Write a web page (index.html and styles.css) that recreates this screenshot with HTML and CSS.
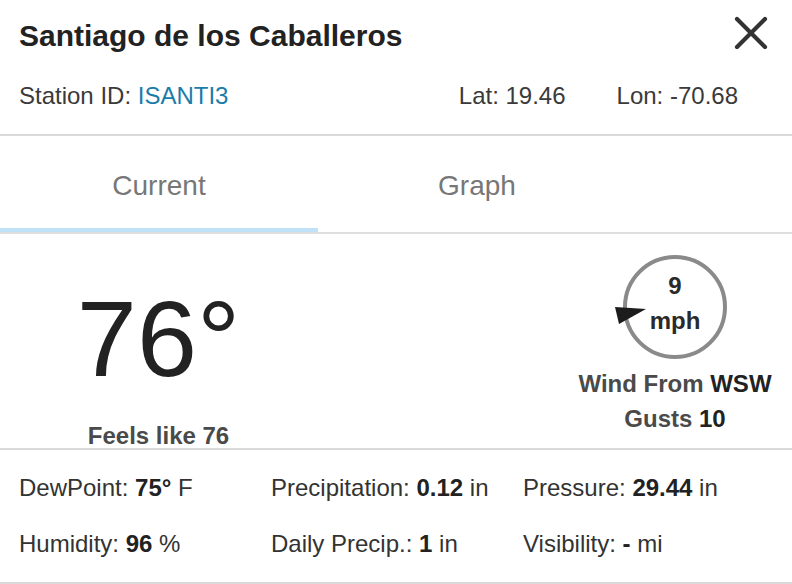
FILE: index.html
```html
<!DOCTYPE html>
<html lang="en">
<head>
<meta charset="utf-8">
<title>Santiago de los Caballeros</title>
<link rel="stylesheet" href="styles.css">
</head>
<body>
<div class="panel">
  <header class="head">
    <div class="title-row">
      <h1 class="title">Santiago de los Caballeros</h1>
      <button class="close" aria-label="Close">
        <svg width="34" height="34" viewBox="0 0 34 34"><path d="M3 4 L31 32 M31 4 L3 32" stroke="#333" stroke-width="4.2" stroke-linecap="round" fill="none"/></svg>
      </button>
    </div>
    <div class="meta">
      <span>Station ID: <a class="station" href="#">ISANTI3</a></span>
      <span class="coords"><span>Lat: 19.46</span><span>Lon: -70.68</span></span>
    </div>
  </header>

  <nav class="tabs">
    <div class="tab active">Current</div>
    <div class="tab">Graph</div>
  </nav>

  <section class="current">
    <div class="temp-col">
      <div class="temp">76°</div>
      <div class="feels">Feels like 76</div>
    </div>
    <div class="wind-col">
      <div class="dial">
        <div class="speed">9</div>
        <div class="speed">mph</div>
        <svg class="pointer" width="36" height="24" viewBox="0 0 36 24"><polygon points="2,4 33,6 6,21" fill="#1c1c1c"/></svg>
      </div>
      <div class="wind-label wind-first">Wind From <b>WSW</b></div>
      <div class="wind-label">Gusts <b>10</b></div>
    </div>
  </section>

  <section class="details">
    <div>DewPoint: <b>75°</b> F</div>
    <div>Precipitation: <b>0.12</b> in</div>
    <div>Pressure: <b>29.44</b> in</div>
    <div>Humidity: <b>96</b> %</div>
    <div>Daily Precip.: <b>1</b> in</div>
    <div>Visibility: <b>-</b> mi</div>
  </section>
</div>
</body>
</html>
```

FILE: styles.css
```css
* { box-sizing: border-box; }
html, body { margin: 0; padding: 0; background: #fff; }
body {
  font-family: "Liberation Sans", Arial, Helvetica, sans-serif;
  color: #333;
}
.panel { width: 792px; }

.head {
  padding: 19px 24px 24px 19px;
  border-bottom: 2px solid #d9d9d9;
}
.title-row {
  display: flex;
  justify-content: space-between;
  align-items: flex-start;
}
.title {
  margin: 0;
  font-size: 30px;
  line-height: 34px;
  font-weight: bold;
  color: #222;
}
.close {
  border: 0;
  background: none;
  padding: 0;
  margin: -4px 0 0 0;
  width: 34px;
  height: 34px;
  cursor: pointer;
}
.close svg { display: block; }
.meta {
  margin-top: 29px;
  display: flex;
  justify-content: space-between;
  font-size: 24px;
  line-height: 28px;
  color: #3a3a3a;
}
.station { color: #1b7caa; text-decoration: none; }
.coords { display: flex; gap: 51px; margin-right: 30px; }

.tabs {
  display: flex;
  border-bottom: 2px solid #dedede;
}
.tab {
  width: 318px;
  text-align: center;
  font-size: 28px;
  line-height: 32px;
  padding: 34px 0 26px;
  color: #777;
  border-bottom: 4px solid transparent;
}
.tab.active { border-bottom-color: #bfe2f8; }

.current {
  display: flex;
  justify-content: space-between;
  height: 216px;
  border-bottom: 2px solid #d9d9d9;
}
.temp-col {
  width: 317px;
  text-align: center;
  padding-top: 50px;
}
.temp {
  font-size: 108px;
  line-height: 110px;
  color: #222;
}
.feels {
  margin-top: 30px;
  font-size: 24px;
  line-height: 24px;
  font-weight: bold;
  color: #4a4a4a;
}
.wind-col {
  width: 234px;
  display: flex;
  flex-direction: column;
  align-items: center;
  padding-top: 21px;
}
.dial {
  position: relative;
  width: 104px;
  height: 104px;
  border: 4px solid #8a8a8a;
  border-radius: 50%;
  padding-top: 9px;
  text-align: center;
}
.speed {
  font-size: 24px;
  line-height: 35px;
  font-weight: bold;
  color: #2a2a2a;
}
.pointer {
  position: absolute;
  left: -14px;
  top: 44px;
}
.wind-label {
  font-size: 24px;
  line-height: 35px;
  font-weight: bold;
  color: #4a4a4a;
}
.wind-first { margin-top: 7px; }
.wind-label b { color: #222; }

.details {
  display: grid;
  grid-template-columns: repeat(3, 252px);
  row-gap: 28px;
  padding: 24px 0 24px 19px;
  font-size: 24px;
  line-height: 28px;
  color: #333;
  border-bottom: 2px solid #d9d9d9;
}
.details b { color: #222; }
```
